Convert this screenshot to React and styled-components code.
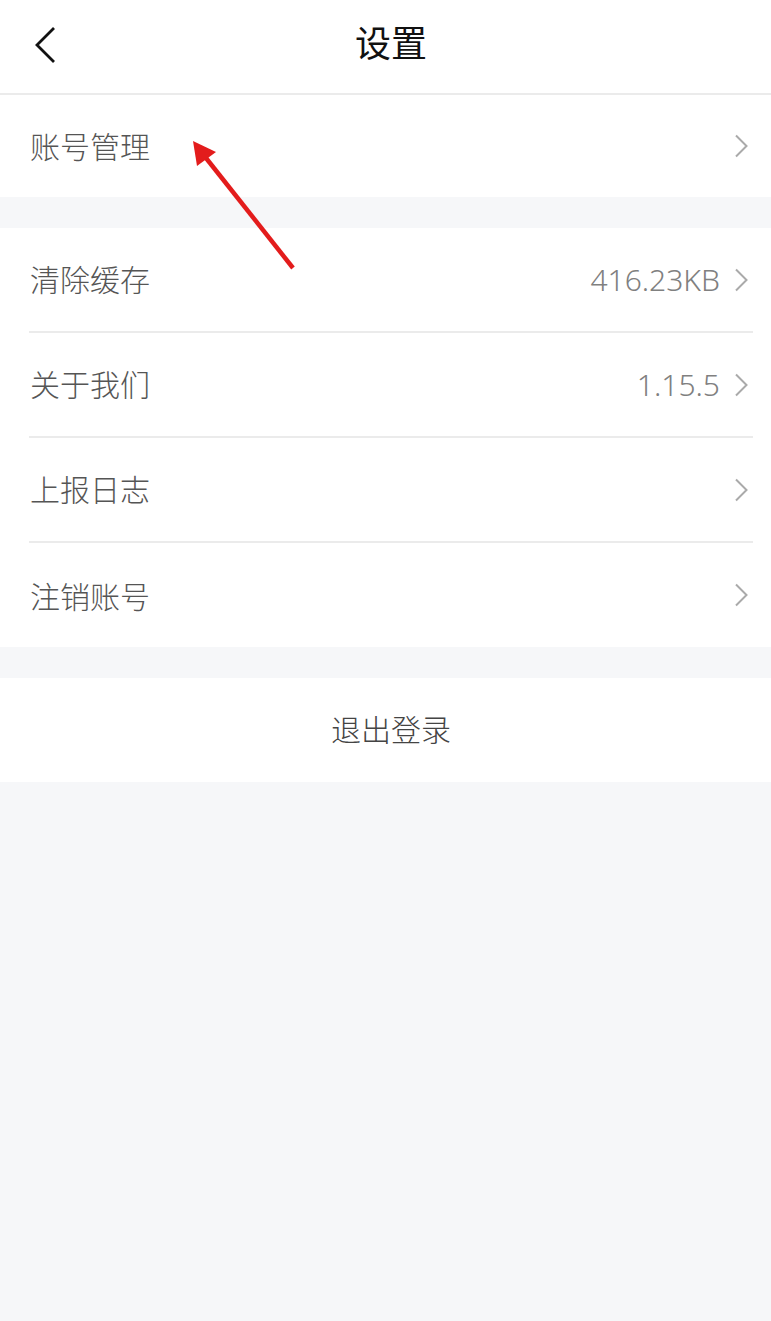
import React from 'react';
import styled, { createGlobalStyle } from 'styled-components';

const GlobalStyle = createGlobalStyle`
  html, body {
    margin: 0;
    padding: 0;
    background: #f6f7f9;
  }
  body {
    font-family: "Noto Sans", "Noto Sans CJK SC", sans-serif;
  }
`;

const Page = styled.div`
  position: relative;
  width: 771px;
  min-height: 1321px;
  background: #f6f7f9;
`;

const Header = styled.header`
  height: 93px;
  padding-left: 11px;
  background: #fff;
  border-bottom: 2px solid #ebebeb;
  display: flex;
  align-items: center;
  justify-content: center;
  position: relative;
`;

const BackButton = styled.button`
  position: absolute;
  left: 28px;
  top: 22px;
  width: 34px;
  height: 46px;
  padding: 0;
  border: none;
  background: none;
  display: flex;
  align-items: center;
  justify-content: center;
`;

const Title = styled.h1`
  margin: 0;
  font-size: 36px;
  font-weight: 400;
  color: #111;
  line-height: 1;
  transform: translateY(-3px);
`;

const Section = styled.section`
  background: #fff;
  margin-bottom: ${(p) => (p.$gap ? '31px' : '0')};
`;

const Row = styled.div`
  height: ${(p) => p.$h || 103}px;
  margin-left: 29px;
  margin-right: 18px;
  padding-right: 5px;
  display: flex;
  align-items: center;
  border-bottom: ${(p) => (p.$divider ? '2px solid #ebebeb' : 'none')};
`;

const Label = styled.span`
  flex: 1;
  font-size: 30px;
  font-weight: 300;
  color: #555;
  line-height: 1;
  padding-left: 1px;
  padding-top: ${(p) => p.$nudge || 0}px;
`;

const Value = styled.span`
  font-size: 30px;
  font-weight: 300;
  color: #808080;
  line-height: 1;
  margin-right: 14px;
`;

const Chevron = styled.svg`
  width: 14px;
  height: 24px;
  flex: none;
`;

const LogoutRow = styled.div`
  height: 104px;
  padding-left: 11px;
  padding-bottom: 5px;
  box-sizing: border-box;
  display: flex;
  align-items: center;
  justify-content: center;
  font-size: 30px;
  font-weight: 300;
  color: #444;
`;

const Annotation = styled.svg`
  position: absolute;
  left: 0;
  top: 0;
  pointer-events: none;
`;

const Arrow = () => (
  <Chevron viewBox="0 0 14 24">
    <path d="M2 1.5 L12.5 12 L2 22.5" fill="none" stroke="#aaa" strokeWidth="2" />
  </Chevron>
);

const items = [
  { label: '清除缓存', value: '416.23KB' },
  { label: '关于我们', value: '1.15.5' },
  { label: '上报日志' },
  { label: '注销账号', nudge: 3 },
];

export default function App() {
  return (
    <Page>
      <GlobalStyle />
      <Header>
        <BackButton aria-label="返回">
          <svg width="30" height="40" viewBox="0 0 30 40">
            <path d="M24 3 L7 20 L24 37" fill="none" stroke="#111" strokeWidth="2.8" />
          </svg>
        </BackButton>
        <Title>设置</Title>
      </Header>

      <Section $gap>
        <Row $h={102}>
          <Label $nudge={2}>账号管理</Label>
          <Arrow />
        </Row>
      </Section>

      <Section $gap>
        {items.map((it, i) => (
          <Row key={it.label} $divider={i < items.length - 1} $h={i < items.length - 1 ? 103 : 104}>
            <Label $nudge={it.nudge}>{it.label}</Label>
            {it.value && <Value>{it.value}</Value>}
            <Arrow />
          </Row>
        ))}
      </Section>

      <Section>
        <LogoutRow>退出登录</LogoutRow>
      </Section>

      <Annotation width="771" height="300" viewBox="0 0 771 300">
        <line x1="293" y1="268" x2="206" y2="158" stroke="#e31c1c" strokeWidth="4.5" />
        <polygon points="193,141 197,166 216,152" fill="#e31c1c" />
      </Annotation>
    </Page>
  );
}
